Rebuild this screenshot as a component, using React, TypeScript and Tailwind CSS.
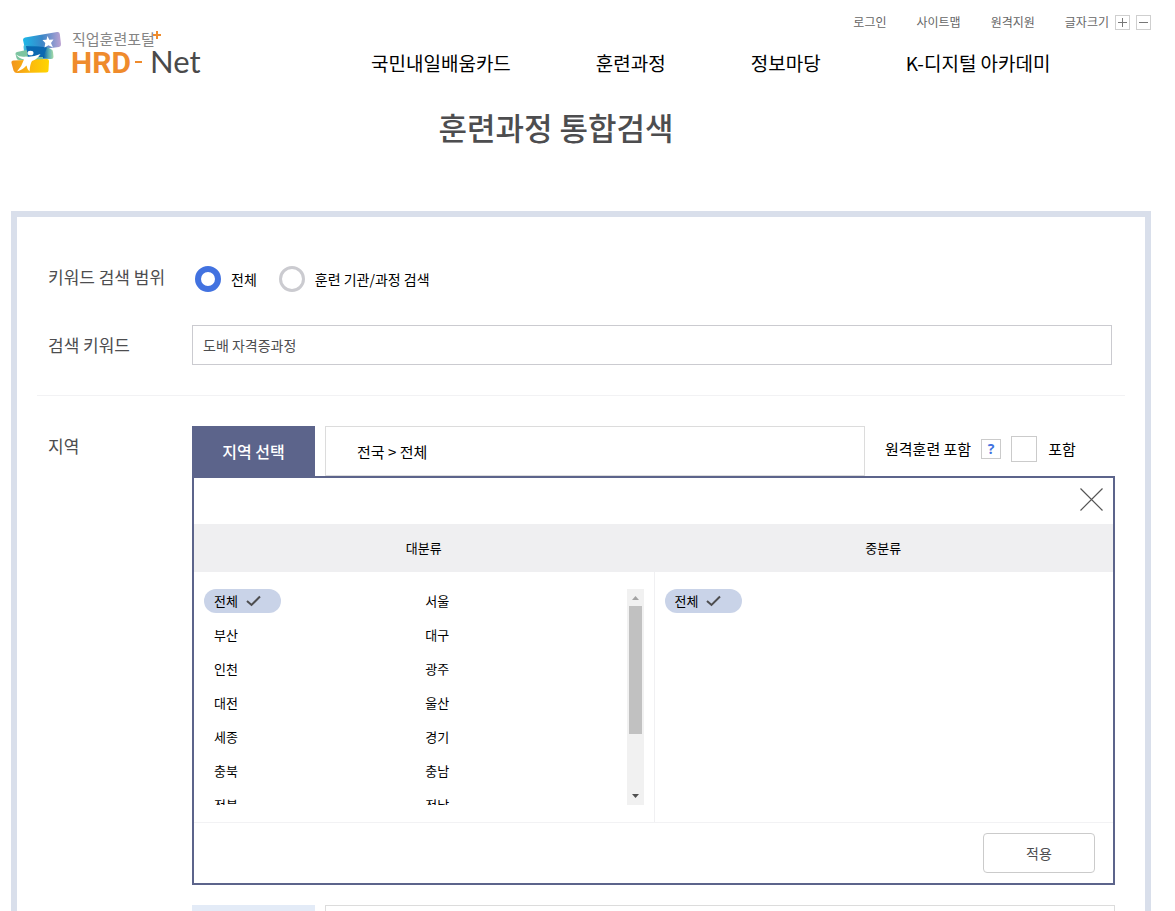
import { useState, type ReactNode } from 'react';
import clsx from 'clsx';

const UTIL_LINKS = ['로그인', '사이트맵', '원격지원'];

const REGIONS = [
  '전체', '서울', '부산', '대구', '인천', '광주', '대전', '울산', '세종',
  '경기', '충북', '충남', '전북', '전남', '경북', '경남', '강원', '제주',
];

function Logo() {
  return (
    <a href="#" aria-label="직업훈련포털 HRD-Net" className="block shrink-0">
      <svg width="194" height="54" viewBox="0 0 194 54">
        <defs>
          <linearGradient id="sky" x1="0" x2="1">
            <stop offset="0" stopColor="#1cb8e8" />
            <stop offset="0.5" stopColor="#3a86c8" />
            <stop offset="1" stopColor="#bda3d2" />
          </linearGradient>
          <linearGradient id="sea" x1="0" x2="1">
            <stop offset="0" stopColor="#45c0de" />
            <stop offset="0.3" stopColor="#1a8fca" />
            <stop offset="0.65" stopColor="#0059a5" />
            <stop offset="0.85" stopColor="#5fb3b4" />
            <stop offset="1" stopColor="#a9dba6" />
          </linearGradient>
          <linearGradient id="sun" x1="0" x2="1">
            <stop offset="0" stopColor="#f2941d" />
            <stop offset="0.5" stopColor="#fbb90d" />
            <stop offset="1" stopColor="#ffd500" />
          </linearGradient>
        </defs>
        <path d="M14 9.500 L46 4 Q48.500 3.500 48.800 6 L50 16 Q50.300 18.500 48 19 L17 23 Q14.500 23 14 21 L12 12 Q11.800 10 14 9.500Z" fill="url(#sky)" />
        <path d="M14 17 L37 19.500 L39.500 21 Q42 21.500 42 24 L42.500 28.500 Q42.500 31 40 31 L17 30 Q14 30 13.500 27 L12.500 19 Q12.300 17 14 17Z" fill="url(#sea)" />
        <path d="M6 24 L20 21 L32 24 L32 32 L8 32 Q6 32 5.500 30 L4.500 26 Q4.300 24.500 6 24Z" fill="#7cc4a0" />
        <path d="M15 18 L36 19.500 L32 29 L17 29Z" fill="#0a68b1" />
        <path d="M2.500 32.500 L36 31 Q38 31 38 33 L37.500 42 Q37.500 44.500 35 44.500 L6 45 Q3.500 45 2.500 42.500 L0.500 35 Q0 32.700 2.500 32.500Z" fill="url(#sun)" />
        <path d="M36.500 8 L38.300 11.800 L42.500 11.500 L40 15 L42 19.500 L37.500 17.300 L33.500 19.500 L34.300 15 L31.500 12 L35.500 11.800Z" fill="#fff" />
        <ellipse cx="19.500" cy="25" rx="3" ry="2.300" fill="#fff" />
        <path d="M5 26.500 Q9 29.500 15 28.500 Q21 29.500 29.500 26 Q26 31.500 21 33 Q19 36 18.500 43.500 Q16 41 15.500 37.500 Q11.500 42 6 43.500 Q11 38 13 31.500 Q8 30.500 5 26.500Z" fill="#fff" />
        <text x="61" y="17" fontSize="15" fill="#858585" className="font-['Noto_Sans_CJK_KR',sans-serif]">직업훈련포털</text>
        <path d="M142 7h8M146 3v8" stroke="#ef8b2c" strokeWidth="2" />
        <text x="60" y="45" fontSize="30" fontWeight="700" fill="#ef8b2c" className="font-[Roboto,sans-serif]">HRD</text>
        <path d="M124 34h7" stroke="#ef8b2c" strokeWidth="2" />
        <text x="139" y="45" fontSize="31" fill="#4a4a4a" className="font-[Lato,sans-serif]">Net</text>
      </svg>
    </a>
  );
}

function FontSizeButton({ label, path }: { label: string; path: string }) {
  return (
    <button type="button" aria-label={label} className="border border-[#cfcfcf]">
      <svg width="13" height="13" viewBox="0 0 13 13" stroke="#777" fill="none">
        <path d={path} />
      </svg>
    </button>
  );
}

function CheckMark() {
  return (
    <svg width="15" height="12" viewBox="0 0 15 12" fill="none" stroke="#4d4d4f" strokeWidth="2">
      <path d="M1 6 L5.500 10 L14 1.500" />
    </svg>
  );
}

interface OptionProps {
  name: string;
  selected: boolean;
  onSelect: () => void;
}

function RegionOption({ name, selected, onSelect }: OptionProps) {
  return (
    <button
      type="button"
      aria-pressed={selected}
      onClick={onSelect}
      className={clsx(
        'flex h-6 w-[77px] items-center gap-2 rounded-full px-2.5 text-[13px] whitespace-nowrap',
        selected && 'bg-[#c9d3e8]',
      )}
    >
      {name}
      {selected && <CheckMark />}
    </button>
  );
}

interface RadioProps {
  label: string;
  checked: boolean;
  onChange: () => void;
}

function ScopeRadio({ label, checked, onChange }: RadioProps) {
  return (
    <label className="flex items-center gap-2.5 text-sm">
      <input
        type="radio"
        name="scope"
        checked={checked}
        onChange={onChange}
        className="size-[26px] appearance-none rounded-full border-[3px] border-[#cbcbd0] bg-white checked:border-[6px] checked:border-[#4272e0]"
      />
      {label}
    </label>
  );
}

function Row({ label, htmlFor, children }: { label: string; htmlFor?: string; children: ReactNode }) {
  return (
    <div className="flex items-start">
      <label htmlFor={htmlFor} className="w-36 shrink-0 py-2 text-[17px] leading-6 text-[#4d4d4f]">
        {label}
      </label>
      <div className="min-w-0 flex-1">{children}</div>
    </div>
  );
}

export default function App() {
  const [scope, setScope] = useState('all');
  const [keyword, setKeyword] = useState('도배 자격증과정');
  const [region, setRegion] = useState('전체');
  const [remote, setRemote] = useState(false);

  return (
    <div className="flex h-screen flex-col overflow-hidden bg-white pr-6 pl-[11px] font-['Noto_Sans_CJK_KR',sans-serif] text-black">
      {/* Header */}
      <header className="flex shrink-0 pt-3.5">
        <div className="pt-3.5">
          <Logo />
        </div>
        <div className="flex-1">
          <div className="flex h-4 items-center justify-end text-xs text-[#666]">
            <nav className="mr-[30px] flex gap-[30px]">
              {UTIL_LINKS.map((text) => (
                <a key={text} href="#">{text}</a>
              ))}
            </nav>
            <div className="flex items-center gap-1.5">
              <span>글자크기</span>
              <FontSizeButton label="글자 크게" path="M2 6.500h9M6.500 2v9" />
              <FontSizeButton label="글자 작게" path="M2 6.500h9" />
            </div>
          </div>
          <nav className="mt-[19px] ml-[166px] flex gap-[85px] text-[19px] leading-7 whitespace-nowrap">
            <a href="#">국민내일배움카드</a>
            <a href="#">훈련과정</a>
            <a href="#">정보마당</a>
            <a href="#">K-디지털 아카데미</a>
          </nav>
        </div>
      </header>

      <h1 className="mt-[21px] mr-[50px] shrink-0 text-center text-[31px] leading-[48px] font-medium text-[#4d4d4f]">
        훈련과정 통합검색
      </h1>

      {/* Search form */}
      <main className="mt-[60px] flex-1 border-6 border-b-0 border-[#d9dfeb] px-5 pt-10">
        <div className="pl-[11px]">
          <Row label="키워드 검색 범위">
            <div className="flex gap-[22px] pt-[9px] pl-[3px]">
              <ScopeRadio label="전체" checked={scope === 'all'} onChange={() => setScope('all')} />
              <ScopeRadio
                label="훈련 기관/과정 검색"
                checked={scope === 'course'}
                onChange={() => setScope('course')}
              />
            </div>
          </Row>
        </div>

        <div className="mt-7 pr-[13px] pl-[11px]">
          <Row label="검색 키워드" htmlFor="keyword">
            <input
              id="keyword"
              type="text"
              value={keyword}
              onChange={(e) => setKeyword(e.target.value)}
              className="block h-10 w-full border border-[#cbcbd0] px-2.5 text-sm text-[#4d4d4f]"
            />
          </Row>
        </div>

        <hr className="mt-[30px] border-[#f2f2f4]" />

        <div className="mt-[30px] pr-2.5 pl-[11px]">
          <Row label="지역">
            <div className="flex h-[50px] items-stretch">
              <button type="button" className="w-[123px] bg-[#5c648b] font-medium text-white">
                지역 선택
              </button>
              <div className="ml-2.5 flex flex-1 items-center border border-[#dcdcdc] px-[31px] pt-0.5 text-[15px]">
                전국 &gt; 전체
              </div>
              <div className="flex w-[250px] items-center pb-1 pl-5 text-[15px]">
                원격훈련 포함
                <button
                  type="button"
                  aria-label="도움말"
                  className="ml-2.5 flex size-5 items-center justify-center border border-[#cbcbcb] font-['Open_Sans',sans-serif] text-sm leading-none font-bold text-[#4272e0]"
                >
                  ?
                </button>
                <label className="ml-2.5 flex items-center gap-[11px]">
                  <input
                    type="checkbox"
                    checked={remote}
                    onChange={(e) => setRemote(e.target.checked)}
                    className="size-[26px] appearance-none border border-[#cbcbcb] bg-white checked:bg-[#4272e0]"
                  />
                  포함
                </label>
              </div>
            </div>

            <section className="border-2 border-[#5c648b]">
              <div className="flex h-[46px] items-start justify-end pt-2.5 pr-2.5">
                <button type="button" aria-label="닫기">
                  <svg width="23" height="23" viewBox="0 0 23 23" stroke="#555" strokeWidth="1.200">
                    <path d="M0.500 0.500 L22.500 22.500 M22.500 0.500 L0.500 22.500" />
                  </svg>
                </button>
              </div>
              <div className="grid h-12 grid-cols-2 items-center bg-[#efeff1] text-center text-[13px]">
                <span>대분류</span>
                <span>중분류</span>
              </div>
              <div className="grid h-[250px] grid-cols-2">
                <div className="flex items-start px-2.5 py-[17px]">
                  <div className="grid h-[216px] flex-1 auto-rows-[24px] grid-cols-2 gap-y-2.5 overflow-hidden">
                    {REGIONS.map((name) => (
                      <RegionOption
                        key={name}
                        name={name}
                        selected={region === name}
                        onSelect={() => setRegion(name)}
                      />
                    ))}
                  </div>
                  {/* Scroll track */}
                  <div className="flex h-[216px] w-[17px] flex-col items-center bg-[#f1f1f1]">
                    <svg width="17" height="17" viewBox="0 0 17 17" fill="#a3a3a3">
                      <path d="M5 11h7L8.500 7z" />
                    </svg>
                    <div className="h-32 w-[13px] bg-[#c1c1c1]" />
                    <svg width="17" height="17" viewBox="0 0 17 17" fill="#505050" className="mt-auto">
                      <path d="M5 6h7l-3.500 4z" />
                    </svg>
                  </div>
                </div>
                <div className="border-l border-[#f0f0f2] py-[17px] pl-2.5">
                  <RegionOption name="전체" selected onSelect={() => {}} />
                </div>
              </div>
              <div className="flex justify-end border-t border-[#f2f2f4] px-[18px] py-2.5">
                <button type="button" className="h-10 w-28 rounded border border-[#cbcbcb] text-sm text-[#4d4d4f]">
                  적용
                </button>
              </div>
            </section>

            <div className="mt-5 flex h-[50px] gap-2.5">
              <div className="w-[123px] bg-[#e3ebf7]" />
              <div className="flex-1 border border-[#dcdcdc]" />
            </div>
          </Row>
        </div>
      </main>
    </div>
  );
}
